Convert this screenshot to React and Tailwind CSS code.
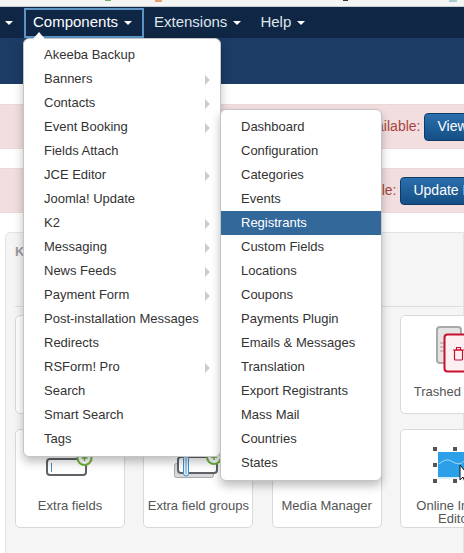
const menu1 = [
  ["Akeeba Backup", false], ["Banners", true], ["Contacts", true], ["Event Booking", true],
  ["Fields Attach", false], ["JCE Editor", true], ["Joomla! Update", false], ["K2", true],
  ["Messaging", true], ["News Feeds", true], ["Payment Form", true], ["Post-installation Messages", false],
  ["Redirects", false], ["RSForm! Pro", true], ["Search", false], ["Smart Search", false], ["Tags", false],
];
const menu2 = ["Dashboard", "Configuration", "Categories", "Events", "Registrants", "Custom Fields", "Locations", "Coupons", "Payments Plugin", "Emails & Messages", "Translation", "Export Registrants", "Mass Mail", "Countries", "States"];

function Caret() {
  return <span className="inline-block ml-[6px] w-0 h-0 align-middle border-x-[4px] border-x-transparent border-t-[4px] border-t-white" />;
}

function Alert({ children, className }) {
  return <div className={`h-[45px] bg-[#f2dede] border-y border-[#ecd8da] flex items-center overflow-hidden whitespace-nowrap gap-[4px] text-[14px] text-[#a94442] ${className}`}>{children}</div>;
}

function BlueButton({ children }) {
  return <div className="h-[28px] shrink-0 flex items-center px-[12px] rounded-[4px] border border-[#0e3a66] bg-gradient-to-b from-[#2a6fae] to-[#144f85] text-white text-[14px] whitespace-nowrap">{children}</div>;
}

function Card({ label, icon }) {
  return (
    <div className="h-[99px] bg-white border border-[#d9d9d9] rounded-[5px] flex flex-col items-center">
      <div className="h-[69px] w-full flex items-start justify-center">{icon}</div>
      <div className="text-[13px] leading-[13px] text-[#555] text-center whitespace-nowrap">{label}</div>
    </div>
  );
}

const FieldIcon = (
  <svg width="60" height="60" viewBox="0 0 60 60" fill="none">
    <rect x="7" y="29" width="39" height="16" rx="3" fill="#fff" stroke="#5f6266" strokeWidth="2" />
    <path d="M11.5 33v9" stroke="#3d8fd0" strokeWidth="1" />
    <circle cx="44.5" cy="28" r="7" fill="#fff" stroke="#6db33f" strokeWidth="2" />
    <path d="M41.5 28h6M44.5 25v6" stroke="#6db33f" strokeWidth="1.4" />
  </svg>
);
const GroupIcon = (
  <svg width="60" height="60" viewBox="0 0 60 60" fill="none">
    <rect x="6.5" y="33.5" width="39" height="14" rx="2" fill="#d8d8d8" stroke="#a8a8a8" />
    <rect x="10" y="27" width="39" height="16" rx="3" fill="#fff" stroke="#5f6266" strokeWidth="2" />
    <rect x="15.5" y="26" width="5" height="20" rx="2.5" fill="#e3f0fa" stroke="#3d8fd0" />
    <path d="M18 27v17" stroke="#3d8fd0" strokeWidth="0.8" />
    <circle cx="46" cy="27" r="7" fill="#fff" stroke="#6db33f" strokeWidth="2" />
    <path d="M43 27h6M46 24v6" stroke="#6db33f" strokeWidth="1.4" />
  </svg>
);
const TrashIcon = (
  <svg width="60" height="60" viewBox="0 0 60 60" fill="none">
    <rect x="12" y="11" width="24" height="36" rx="3" fill="#e4e4e4" stroke="#a9a9a9" strokeWidth="2" />
    <path d="M15 27h4M15 31h4M15 35h4" stroke="#9a9a9a" />
    <rect x="19.5" y="18.5" width="31" height="37" rx="3" fill="#fdf0f2" stroke="#c8102e" strokeWidth="2" />
    <rect x="29.5" y="34" width="8" height="10" rx="1" fill="none" stroke="#c8102e" strokeWidth="1.2" />
    <path d="M28 34h11M31.5 34v-2.500h4v2.500" stroke="#c8102e" strokeWidth="1.1" />
  </svg>
);
const ImageIcon = (
  <svg width="60" height="60" viewBox="0 0 60 60" fill="none">
    <rect x="13" y="22" width="38" height="25" fill="#2b9fe8" />
    <path d="M14 34c6-5 9-5 14-2s9 2 12-2" stroke="#a8dcf8" strokeWidth="1" />
    <path d="M13 48h36" stroke="#cfe8f7" strokeWidth="1.500" />
    <rect x="8" y="17" width="4" height="4" fill="#555" />
    <rect x="28" y="17" width="4" height="4" fill="#555" />
    <rect x="8" y="33" width="4" height="4" fill="#555" />
    <rect x="8" y="49" width="4" height="4" fill="#555" />
    <rect x="28" y="49" width="4" height="4" fill="#555" />
    <path d="M35 35v15l3-3 2 5 2-1-2-5h4z" fill="#fff" stroke="#111" strokeWidth="1" />
  </svg>
);

export default function App() {
  return (
    <div className="relative w-[464px] h-[553px] overflow-hidden bg-white font-['Liberation_Sans',Arial,sans-serif]">
      <div className="relative h-[7px] bg-[#f4f4f4] border-b border-[#c9ced3]">
        <span className="absolute left-[105px] top-0 w-[6px] h-[1px] bg-[#6fae6a]" />
        <span className="absolute left-[155px] top-0 w-[7px] h-[2px] bg-[#e8a070]" />
        <span className="absolute left-[343px] top-0 w-[5px] h-[1px] bg-[#333]" />
        <span className="absolute left-[449px] top-0 w-[8px] h-[2px] bg-[#a5cfd2]" />
      </div>

      <nav className="h-[31px] bg-[#0f2644] flex items-center text-[15px] text-[#dfe5ec]">
        <div className="w-[24px] flex justify-end pr-[11px]"><Caret /></div>
        <div className="h-[30px] w-[120px] border-2 border-[#5d94c3] flex items-center pl-[7px] text-white whitespace-nowrap">
          Components<Caret />
        </div>
        <div className="ml-[10px] whitespace-nowrap">Extensions<Caret /></div>
        <div className="ml-[19px] whitespace-nowrap">Help<Caret /></div>
      </nav>

      <div className="h-[46px] bg-[#1c3b65]" />

      <div className="pt-[20px] flex flex-col gap-[19px]">
        <Alert className="pl-[360px]"><span>Available:</span><BlueButton>View Updates</BlueButton></Alert>
        <Alert className="pl-[336px]"><span>Available:</span><BlueButton>Update Now</BlueButton></Alert>
      </div>

      <div className="mt-[19px] ml-[5px] bg-[#f5f5f5] border border-[#e3e3e3] rounded-tl-[5px] h-[330px] pl-[9px] pt-[12px]">
        <div className="text-[13px] font-bold leading-[14px] text-[#999]">K</div>
        <div className="mt-[47px] h-[1px] bg-[#dedede]" />
        <div className="mt-[8px] grid grid-cols-[110px_110px_110px_110px] gap-x-[18.33px] gap-y-[15px]">
          <Card label="" icon={null} />
          <Card label="" icon={null} />
          <Card label="" icon={null} />
          <Card label="Trashed Items" icon={TrashIcon} />
          <Card label="Extra fields" icon={FieldIcon} />
          <Card label="Extra field groups" icon={GroupIcon} />
          <Card label="Media Manager" icon={null} />
          <Card label={<span>Online Image<br />Editor</span>} icon={ImageIcon} />
        </div>
      </div>

      <ul className="absolute left-[23px] top-[38px] w-[198px] h-[419px] pt-[4px] bg-white border border-[#c4c4c4] rounded-[6px] shadow-[0_5px_10px_rgba(0,0,0,0.25)] text-[13px] text-[#333]">
        {menu1.map(([label, sub]) => (
          <li key={label} className="relative h-[24px] pl-[20px] flex items-center whitespace-nowrap">
            {label}
            {sub && <span className="absolute right-[10px] top-[8px] w-0 h-0 border-y-[5px] border-y-transparent border-l-[5px] border-l-[#cccccc]" />}
          </li>
        ))}
      </ul>
      <div className="absolute left-[33px] top-[32px] w-0 h-0 border-x-[6px] border-x-transparent border-b-[7px] border-b-white" />

      <ul className="absolute left-[220px] top-[109px] w-[162px] h-[372px] pt-[5px] bg-white border border-[#c4c4c4] rounded-[6px] shadow-[0_5px_10px_rgba(0,0,0,0.25)] text-[13px] text-[#333]">
        {menu2.map((label) => (
          <li key={label} className={`h-[24px] pl-[20px] flex items-center whitespace-nowrap ${label === "Registrants" ? "bg-[#33689b] text-white" : ""}`}>
            {label}
          </li>
        ))}
      </ul>
    </div>
  );
}
